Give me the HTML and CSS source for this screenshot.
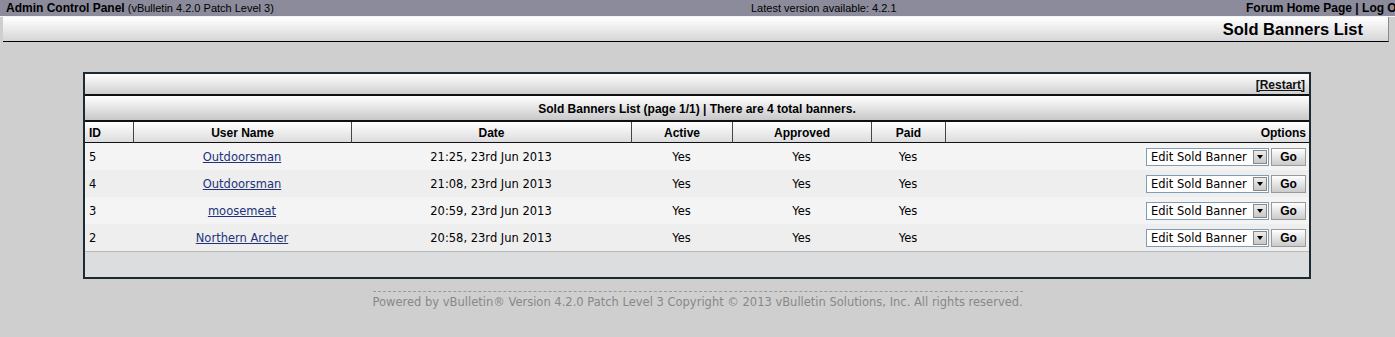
FILE: index.html
```html
<!DOCTYPE html>
<html lang="en">
<head>
<meta charset="UTF-8">
<title>Admin Control Panel</title>
<link rel="stylesheet" href="styles.css">
</head>
<body>

<div class="topbar">
  <div class="tb-left"><b>Admin Control Panel</b> (vBulletin 4.2.0 Patch Level 3)</div>
  <div class="tb-mid">Latest version available: 4.2.1</div>
  <div class="tb-right"><b>Forum Home Page | Log Out</b></div>
</div>

<div class="pagetitle">Sold Banners List</div>

<div class="tborder">
  <table class="list">
    <colgroup>
      <col style="width:48px">
      <col style="width:218px">
      <col style="width:280px">
      <col style="width:101px">
      <col style="width:139px">
      <col style="width:74px">
      <col>
    </colgroup>
    <tr class="restart-row">
      <td colspan="7"><a href="#">[Restart]</a></td>
    </tr>
    <tr class="cat-row">
      <td colspan="7">Sold Banners List (page 1/1) | There are 4 total banners.</td>
    </tr>
    <tr class="thead">
      <td class="left">ID</td>
      <td>User Name</td>
      <td>Date</td>
      <td>Active</td>
      <td>Approved</td>
      <td>Paid</td>
      <td class="right">Options</td>
    </tr>
    <tr class="alt1">
      <td class="left">5</td>
      <td><a href="#">Outdoorsman</a></td>
      <td>21:25, 23rd Jun 2013</td>
      <td>Yes</td>
      <td>Yes</td>
      <td>Yes</td>
      <td class="right"><span class="select">Edit Sold Banner<span class="arrow"></span></span><button class="go">Go</button></td>
    </tr>
    <tr class="alt2">
      <td class="left">4</td>
      <td><a href="#">Outdoorsman</a></td>
      <td>21:08, 23rd Jun 2013</td>
      <td>Yes</td>
      <td>Yes</td>
      <td>Yes</td>
      <td class="right"><span class="select">Edit Sold Banner<span class="arrow"></span></span><button class="go">Go</button></td>
    </tr>
    <tr class="alt1">
      <td class="left">3</td>
      <td><a href="#">moosemeat</a></td>
      <td>20:59, 23rd Jun 2013</td>
      <td>Yes</td>
      <td>Yes</td>
      <td>Yes</td>
      <td class="right"><span class="select">Edit Sold Banner<span class="arrow"></span></span><button class="go">Go</button></td>
    </tr>
    <tr class="alt2">
      <td class="left">2</td>
      <td><a href="#">Northern Archer</a></td>
      <td>20:58, 23rd Jun 2013</td>
      <td>Yes</td>
      <td>Yes</td>
      <td>Yes</td>
      <td class="right"><span class="select">Edit Sold Banner<span class="arrow"></span></span><button class="go">Go</button></td>
    </tr>
    <tr class="tfoot">
      <td colspan="7"></td>
    </tr>
  </table>
</div>

<div class="copyright">Powered by vBulletin&reg; Version 4.2.0 Patch Level 3 Copyright &copy; 2013 vBulletin Solutions, Inc. All rights reserved.</div>

</body>
</html>
```

FILE: styles.css
```css
body {
  margin: 0;
  background-color: #cfcfcf;
  font-family: Tahoma, 'Liberation Sans', sans-serif;
  font-size: 11px;
  color: #000;
  overflow: hidden;
}
a {
  color: #22327a;
}
.topbar {
  display: flex;
  height: 16px;
  line-height: 16px;
  background-color: #8b8b9b;
  border-bottom: 1px solid #f4f4f4;
  white-space: nowrap;
  overflow: hidden;
}
.topbar b {
  font-size: 12px;
}
.tb-left {
  flex: 0 0 745px;
  padding-left: 6px;
}
.tb-mid {
  flex: 0 0 495px;
}
.tb-right {
  flex: 0 0 auto;
}
.pagetitle {
  margin-left: 3px;
  width: 1360px;
  height: 24px;
  line-height: 25px;
  padding-right: 25px;
  text-align: right;
  font-size: 16.5px;
  font-weight: bold;
  background: linear-gradient(#ffffff, #d6d6d8);
  border-bottom: 1px solid #000;
  border-right: 1px solid #8a8a8a;
}
.tborder {
  margin: 30px 0 0 83px;
  width: 1224px;
  border: 2px solid #1c2a33;
  background-color: #dcdddf;
}
.list {
  width: 100%;
  border-collapse: separate;
  border-spacing: 0;
  table-layout: fixed;
}
.list td {
  padding: 0 4px;
  text-align: center;
  white-space: nowrap;
  overflow: hidden;
  box-sizing: border-box;
}
.list td.left {
  text-align: left;
}
.list td.right {
  text-align: right;
  padding-right: 3px;
}
.restart-row td {
  height: 22px;
  padding-top: 1px;
  text-align: right;
  font-size: 12px;
  font-weight: bold;
  background: linear-gradient(#ffffff, #cfcfd1);
  border-bottom: 2px solid #111;
}
.restart-row a {
  color: #111;
}
.cat-row td {
  height: 26px;
  padding-top: 1px;
  font-size: 12px;
  font-weight: bold;
  background: linear-gradient(#ffffff, #c8c8ca);
  border-bottom: 2px solid #111;
}
.thead td {
  height: 21px;
  padding-top: 1px;
  font-size: 12px;
  font-weight: bold;
  background: linear-gradient(#ffffff, #dcdcde);
  border-left: 1px solid #444;
  border-bottom: 1px solid #111;
}
.thead td:first-child {
  border-left: none;
}
.alt1 td,
.alt2 td {
  height: 27px;
  font-family: Verdana, 'DejaVu Sans', sans-serif;
  font-size: 11.5px;
}
.alt1 td {
  background-color: #f4f4f4;
}
.alt2 td {
  background-color: #eeeeee;
}
.tfoot td {
  height: 26px;
  background-color: #dcdddf;
  border-top: 1px solid #b9b9b9;
}
.select {
  display: inline-block;
  vertical-align: middle;
  position: relative;
  width: 101px;
  height: 16px;
  line-height: 16px;
  padding: 0 16px 0 4px;
  text-align: left;
  background-color: #fff;
  border: 1px solid #7f9db9;
  font-size: 11.5px;
}
.arrow {
  position: absolute;
  right: 1px;
  top: 1px;
  width: 12px;
  height: 12px;
  background: linear-gradient(#ececec, #c8c8c8);
  border: 1px solid #888;
}
.arrow::after {
  content: '';
  position: absolute;
  left: 3px;
  top: 4px;
  border-left: 3px solid transparent;
  border-right: 3px solid transparent;
  border-top: 4px solid #000;
}
.go {
  vertical-align: middle;
  margin-left: 2px;
  width: 35px;
  height: 18px;
  padding: 0;
  font-family: Tahoma, 'Liberation Sans', sans-serif;
  font-size: 12px;
  font-weight: bold;
  background: linear-gradient(#ffffff, #cacaca);
  border: 1px solid #9a9a9a;
  border-radius: 0;
}
.copyright {
  width: 650px;
  margin: 12px auto 0;
  padding-top: 3px;
  border-top: 1px dashed #9a9a9a;
  text-align: center;
  font-family: Verdana, 'DejaVu Sans', sans-serif;
  font-size: 11.5px;
  color: #888;
  white-space: nowrap;
}
```
